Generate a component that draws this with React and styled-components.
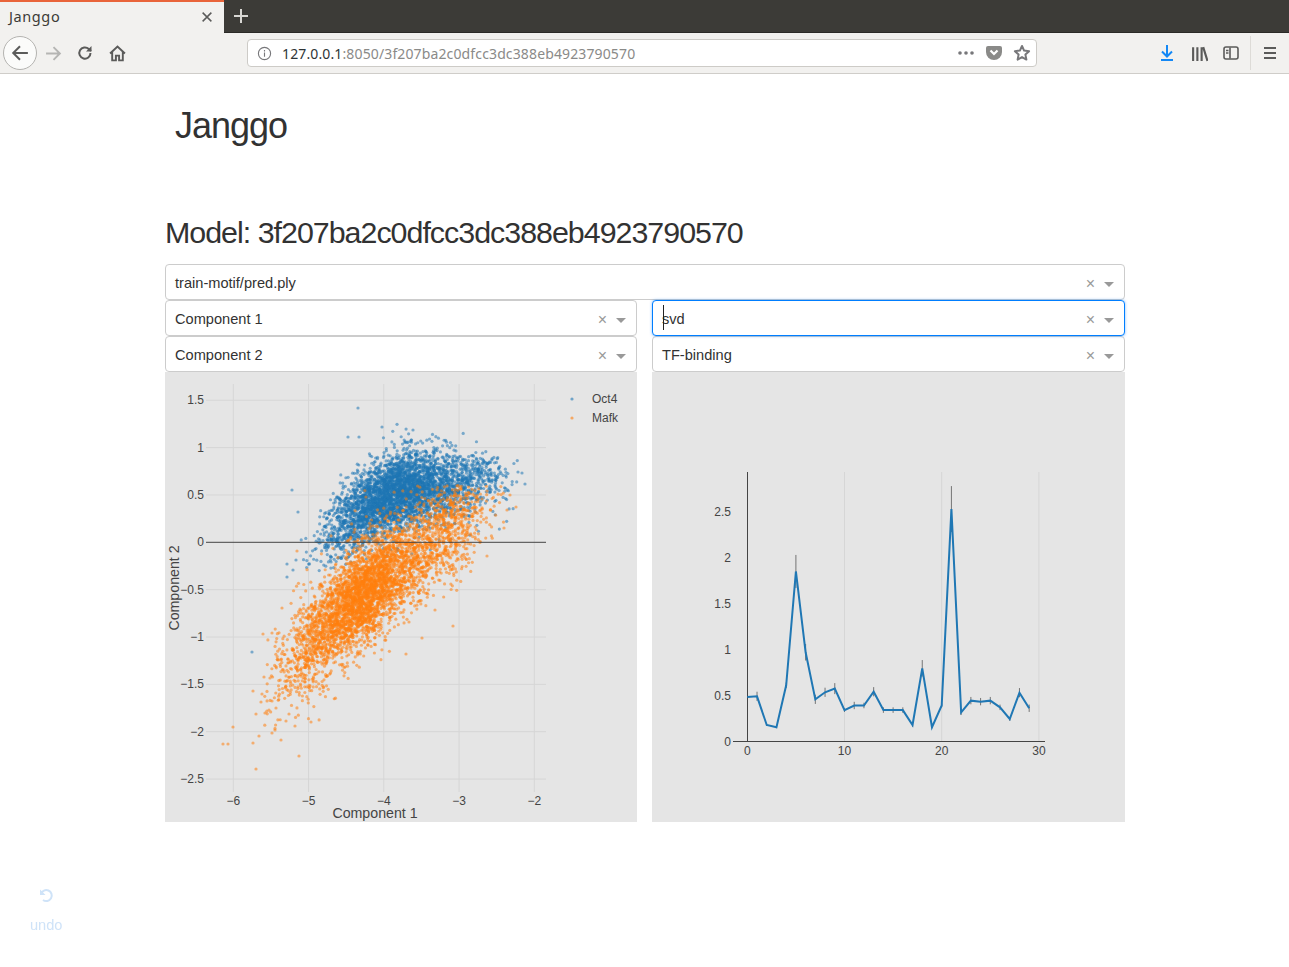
import { useMemo } from "react";
import styled, { createGlobalStyle } from "styled-components";

const GlobalStyle = createGlobalStyle`
  html, body {
    margin: 0;
    padding: 0;
    background: #fff;
    font-family: "Liberation Sans", Arial, sans-serif;
  }
`;

/* browser chrome */
const TabStrip = styled.div`
  display: flex;
  height: 33px;
  background: #3c3b37;
  box-shadow: inset 0 -1px 0 #2b2a27;
`;

const Tab = styled.div`
  display: flex;
  align-items: center;
  justify-content: space-between;
  width: 224px;
  box-sizing: border-box;
  padding: 0 10px 4px 9px;
  background: #f2f1ef;
  border-top: 2px solid #e9643a;
  color: #3c3b37;
  font: 14.5px "Noto Sans", sans-serif;
  letter-spacing: 0.6px;
  svg {
    margin-top: 2px;
  }
`;

const NewTab = styled.div`
  display: flex;
  align-items: center;
  justify-content: center;
  width: 34px;
  padding-bottom: 2px;
  color: #d8d7d3;
`;

const Toolbar = styled.div`
  display: flex;
  align-items: center;
  height: 40px;
  padding-left: 3px;
  background: #f2f1ef;
  border-bottom: 1px solid #cfcdc9;
`;

const BackButton = styled.div`
  display: flex;
  align-items: center;
  justify-content: center;
  width: 32px;
  height: 32px;
  border: 1px solid #b4b3b0;
  border-radius: 50%;
  background: #fbfbfa;
`;

const NavButton = styled.div`
  display: flex;
  align-items: center;
  justify-content: center;
  width: 32px;
  height: 32px;
`;

const AddressBar = styled.div`
  display: flex;
  align-items: center;
  width: 790px;
  height: 28px;
  margin: 0 114px;
  box-sizing: border-box;
  padding: 0 5px 0 9px;
  background: #fff;
  border: 1px solid #cdcbc7;
  border-radius: 4px;
  font: 14px "Noto Sans", sans-serif;
  letter-spacing: 0.13px;
  color: #8a8a88;
`;

const Url = styled.div`
  flex: 1;
  margin-left: 10px;
  white-space: nowrap;
  b {
    font-weight: 400;
    color: #2e3436;
  }
`;

const UrlActions = styled.div`
  display: flex;
  align-items: center;
  gap: 10px;
`;

const ToolbarDivider = styled.div`
  width: 1px;
  height: 34px;
  margin: 0 3px 0 3px;
  background: #dddbd7;
`;

/* page */
const Page = styled.div`
  width: 960px;
  margin-left: 165px;
  color: #323232;
`;

const Brand = styled.h1`
  margin: 0;
  padding: 30px 0 0 10px;
  height: 60px;
  font-size: 36px;
  line-height: 44px;
  font-weight: 300;
  letter-spacing: -1px;
`;

const ModelTitle = styled.h2`
  margin: 0;
  padding-top: 50px;
  height: 50px;
  font-size: 30.4px;
  line-height: 36px;
  font-weight: 300;
  letter-spacing: -1px;
`;

const Columns = styled.div`
  display: grid;
  grid-template-columns: 472px 473px;
  column-gap: 15px;
`;

const SelectBox = styled.div`
  position: relative;
  display: flex;
  align-items: center;
  height: 36px;
  box-sizing: border-box;
  padding: 0 10px 0 9px;
  background: #fff;
  border: 1px solid ${(p) => (p.$focused ? "#007eff" : "#ccc")};
  border-radius: 4px;
  box-shadow: ${(p) => (p.$focused ? "0 0 3px rgba(0, 126, 255, 0.5)" : "none")};
  z-index: ${(p) => (p.$focused ? 1 : 0)};
  font-size: 14.6px;
`;

const SelectValue = styled.div`
  flex: 1;
  position: relative;
  top: 1px;
`;

const TextCaret = styled.span`
  position: absolute;
  left: 1px;
  top: -6px;
  width: 1px;
  height: 25px;
  background: #222;
`;

const Clear = styled.span`
  width: 17px;
  margin-top: 4px;
  color: #999;
  font-size: 16px;
  line-height: 1;
  text-align: center;
`;

const Arrow = styled.span`
  width: 0;
  height: 0;
  margin: 4px 0 0 5px;
  border: 5px solid transparent;
  border-top-color: #999;
  border-bottom-width: 0;
`;

const PlotPanel = styled.div`
  height: 450px;
  background: #e5e5e5;
`;

const PlotSvg = styled.svg`
  display: block;
  width: 100%;
  height: 100%;
`;

const Tick = styled.text`
  font-family: "Liberation Sans", Arial, sans-serif;
  font-size: 12px;
  fill: #444;
`;

const AxisTitle = styled.text`
  font-family: "Liberation Sans", Arial, sans-serif;
  font-size: 14.2px;
  fill: #444;
`;

const UndoButton = styled.div`
  position: fixed;
  left: 30px;
  top: 887px;
  display: flex;
  flex-direction: column;
  align-items: center;
  gap: 14px;
  color: #cfe3f8;
  font-size: 14.6px;
`;

/* icons */
const Stroke = ({ size = 16, color = "#5b5b5a", width = 2, children }) => (
  <svg width={size} height={size} viewBox="0 0 16 16" fill="none" stroke={color} strokeWidth={width}>
    {children}
  </svg>
);

const PocketIcon = () => (
  <svg width="18" height="16" viewBox="0 0 18 16">
    <path d="M1 3a2 2 0 0 1 2-2h12a2 2 0 0 1 2 2v4a8 8 0 0 1-16 0z" fill="#8a8a88" />
    <path d="M5.500 5.500 9 9l3.500-3.500" fill="none" stroke="#fff" strokeWidth="2.200" />
  </svg>
);

const StarIcon = () => (
  <svg width="18" height="18" viewBox="0 0 18 18">
    <path d="M9 2l2.100 4.600 5 .6-3.700 3.400 1 5L9 13.100 4.600 15.600l1-5L1.900 7.200l5-.6z" fill="none" stroke="#77777a" strokeWidth="2" strokeLinejoin="round" />
  </svg>
);

const BrowserChrome = () => (
  <>
    <TabStrip>
      <Tab>
        Janggo
        <Stroke size={14} width={1.7}>
          <path d="M3 3l10 10M13 3L3 13" />
        </Stroke>
      </Tab>
      <NewTab>
        <Stroke size={16} color="#d8d7d3" width={2}>
          <path d="M8 1v14M1 8h14" />
        </Stroke>
      </NewTab>
    </TabStrip>
    <Toolbar>
      <BackButton>
        <Stroke size={18} width={1.8}>
          <path d="M15 8H2M8 2L2 8l6 6" />
        </Stroke>
      </BackButton>
      <NavButton>
        <Stroke size={17} color="#b5b5b3" width={1.8}>
          <path d="M1 8h13M8 2l6 6-6 6" />
        </Stroke>
      </NavButton>
      <NavButton>
        <Stroke size={16} width={2}>
          <path d="M13.500 8a5.600 5.600 0 1 1-1.700-4L14 6" />
          <path d="M14.500 1v5.500H9" fill="#5b5b5a" stroke="none" />
        </Stroke>
      </NavButton>
      <NavButton>
        <Stroke size={17} width={1.8}>
          <path d="M1 8l7-6.500L15 8M3 6.500V14.500h3.500V10h3v4.500H13V6.500" />
        </Stroke>
      </NavButton>
      <AddressBar>
        <Stroke size={15} color="#77777a" width={1.2}>
          <circle cx="8" cy="8" r="6.500" />
          <path d="M8 7v4.500M8 4.200v1.600" />
        </Stroke>
        <Url>
          <b>127.0.0.1</b>:8050/3f207ba2c0dfcc3dc388eb4923790570
        </Url>
        <UrlActions>
          <svg width="18" height="4" viewBox="0 0 18 4" fill="#77777a">
            <circle cx="3" cy="2" r="1.800" />
            <circle cx="9" cy="2" r="1.800" />
            <circle cx="15" cy="2" r="1.800" />
          </svg>
          <PocketIcon />
          <StarIcon />
        </UrlActions>
      </AddressBar>
      <NavButton>
        <Stroke size={16} color="#1488f5" width={2}>
          <path d="M8 0v11M3 6.500l5 5 5-5M2 15h12" />
        </Stroke>
      </NavButton>
      <NavButton>
        <Stroke size={17} width={2}>
          <path d="M2 2v13M6 2v13M10 2v13M11.500 2l4 13" />
        </Stroke>
      </NavButton>
      <NavButton>
        <Stroke size={16} width={1.6}>
          <rect x="1" y="2" width="14" height="12" rx="2" />
          <path d="M7 2.500v11M3 5.500h2.500M3 8h2.500" />
        </Stroke>
      </NavButton>
      <ToolbarDivider />
      <NavButton>
        <Stroke size={16} width={2}>
          <path d="M2 3h12M2 8h12M2 13h12" />
        </Stroke>
      </NavButton>
    </Toolbar>
  </>
);

const Select = ({ value, focused }) => (
  <SelectBox $focused={focused}>
    <SelectValue>
      {focused && <TextCaret />}
      {value}
    </SelectValue>
    <Clear>×</Clear>
    <Arrow />
  </SelectBox>
);

/* seeded random so that the picture is stable */
const makeRandom = (seed) => {
  let s = seed;
  const uniform = () => {
    s = (s + 0x6d2b79f5) | 0;
    let t = Math.imul(s ^ (s >>> 15), 1 | s);
    t = (t + Math.imul(t ^ (t >>> 7), 61 | t)) ^ t;
    return ((t ^ (t >>> 14)) >>> 0) / 4294967296;
  };
  const normal = () =>
    Math.sqrt(-2 * Math.log(uniform() + 1e-9)) * Math.cos(2 * Math.PI * uniform());
  return { uniform, normal };
};

const scatterX = (v) => 68.3 + (v + 6) * 75.25;
const scatterY = (v) => 170.3 - v * 94.7;

const makeBlue = () => {
  const { normal, uniform } = makeRandom(11);
  const pts = [];
  for (let i = 0; i < 4000; i++) {
    const tail = uniform() < 0.07;
    const x = tail ? -2.8 + normal() * 0.27 : -3.82 + normal() * 0.46;
    const base = x < -3.3 ? 0.72 - 0.26 * (x + 3.3) ** 2 : 0.72 - 0.04 * (x + 3.3);
    const y = base + normal() * (tail ? 0.12 : 0.2) - (tail ? 0 : 0.12);
    if (y > -0.3 && x < -2.2 && x > -5.1 && y < 1.25) pts.push([scatterX(x), scatterY(y)]);
  }
  return pts;
};

const makeOrange = () => {
  const { normal, uniform } = makeRandom(29);
  const pts = [];
  for (let i = 0; i < 4300; i++) {
    const r = uniform();
    let x = -4.25 + normal() * 0.42;
    if (r < 0.17) x = -3.15 + normal() * 0.32;
    else if (r < 0.27) x = -4.95 + normal() * 0.28;
    const base = x < -4.1 ? -0.42 + 0.72 * (x + 4.1) : -0.42 + 0.58 * (x + 4.1);
    const y = base + normal() * (x < -4.9 ? 0.26 : 0.27);
    if (x > -5.6 && x < -2.4 && y < 0.6) pts.push([scatterX(x), scatterY(y)]);
  }
  return pts;
};

// stray points read off the picture, in panel coordinates
const blueStrays = [
  [193, 36], [217, 55], [183, 65], [194, 65], [248, 58], [360, 112], [357, 101], [353, 100],
  [127, 118], [87, 280], [122, 192], [128, 198], [122, 205], [131, 188], [133, 140],
];
const orangeStrays = [
  [58, 372], [63, 372], [68, 355], [91, 397], [134, 384], [88, 371], [94, 364], [107, 361],
  [110, 358], [116, 368], [130, 354], [121, 349], [124, 342], [146, 350], [91, 342], [100, 341],
  [104, 338], [107, 329], [111, 336], [88, 319], [96, 330], [97, 322], [99, 305], [105, 306],
  [98, 262], [107, 261], [117, 236], [288, 254], [257, 266], [241, 282], [270, 238], [244, 250],
  [132, 179], [351, 135], [345, 123], [342, 138], [322, 184], [339, 156],
];

const scatterXTicks = [["−6", -6], ["−5", -5], ["−4", -4], ["−3", -3], ["−2", -2]];
const scatterYTicks = [
  ["1.5", 1.5], ["1", 1], ["0.5", 0.5], ["−0.5", -0.5], ["−1", -1],
  ["−1.5", -1.5], ["−2", -2], ["−2.5", -2.5],
];

const Dots = ({ points, color }) => (
  <g fill={color} fillOpacity="0.55">
    {points.map(([x, y], i) => (
      <circle key={i} cx={x} cy={y} r="1.600" />
    ))}
  </g>
);

const ScatterPlot = () => {
  const blue = useMemo(() => [...makeBlue(), ...blueStrays], []);
  const orange = useMemo(() => [...makeOrange(), ...orangeStrays], []);
  return (
    <PlotSvg viewBox="0 0 472 450">
      <g stroke="#d6d6d6" strokeWidth="1">
        {scatterXTicks.map(([label, v]) => (
          <line key={label} x1={scatterX(v)} x2={scatterX(v)} y1="12" y2="420" />
        ))}
        {scatterYTicks.map(([label, v]) => (
          <line key={label} x1="41" x2="381" y1={scatterY(v)} y2={scatterY(v)} />
        ))}
      </g>
      <Dots points={blue} color="#1f77b4" />
      <Dots points={orange} color="#ff7f0e" />
      <line x1="41" x2="381" y1={scatterY(0)} y2={scatterY(0)} stroke="#444" strokeWidth="1" />
      {scatterXTicks.map(([label, v]) => (
        <Tick key={label} x={scatterX(v)} y="433" textAnchor="middle">
          {label}
        </Tick>
      ))}
      {[...scatterYTicks, ["0", 0]].map(([label, v]) => (
        <Tick key={label} x="39" y={scatterY(v) + 4} textAnchor="end">
          {label}
        </Tick>
      ))}
      <AxisTitle x="210" y="446" textAnchor="middle">Component 1</AxisTitle>
      <AxisTitle x="14" y="216" textAnchor="middle" transform="rotate(-90 14 216)">Component 2</AxisTitle>
      <circle cx="407" cy="27" r="1.600" fill="#1f77b4" fillOpacity="0.6" />
      <circle cx="407" cy="46" r="1.600" fill="#ff7f0e" fillOpacity="0.6" />
      <Tick x="427" y="31">Oct4</Tick>
      <Tick x="427" y="50">Mafk</Tick>
    </PlotSvg>
  );
};

const lineValues = [
  0.483, 0.49, 0.178, 0.153, 0.61, 1.85, 0.97, 0.457, 0.534, 0.574, 0.34, 0.39, 0.39, 0.54, 0.34,
  0.34, 0.34, 0.178, 0.795, 0.153, 0.39, 2.53, 0.316, 0.443, 0.432, 0.443, 0.37, 0.243, 0.53, 0.36,
];
const lineErrors = [
  0, 0.05, 0.01, 0.01, 0.03, 0.18, 0.09, 0.05, 0.05, 0.06, 0.02, 0.04, 0.03, 0.05, 0.03, 0.03, 0.03,
  0.02, 0.09, 0.01, 0.02, 0.25, 0.03, 0.04, 0.04, 0.04, 0.03, 0.02, 0.05, 0.04,
];
const lineX = (i) => 95.3 + i * 9.72;
const lineY = (v) => 369.3 - v * 91.8;

const LinePlot = () => (
  <PlotSvg viewBox="0 0 473 450">
    <g stroke="#d6d6d6" strokeWidth="1">
      {[10, 20, 30].map((v) => (
        <line key={v} x1={lineX(v)} x2={lineX(v)} y1="100" y2="369" />
      ))}
    </g>
    <line x1="95.500" x2="95.500" y1="100" y2="369.500" stroke="#444" strokeWidth="1" />
    <line x1="81" x2="393" y1="369.500" y2="369.500" stroke="#444" strokeWidth="1" />
    <g stroke="#444" strokeWidth="1" strokeOpacity="0.7">
      {lineValues.map((v, i) => (
        <line key={i} x1={lineX(i)} x2={lineX(i)} y1={lineY(v + lineErrors[i])} y2={lineY(v - lineErrors[i])} />
      ))}
    </g>
    <polyline
      points={lineValues.map((v, i) => `${lineX(i)},${lineY(v)}`).join(" ")}
      fill="none"
      stroke="#1f77b4"
      strokeWidth="2"
    />
    {[0, 10, 20, 30].map((v) => (
      <Tick key={v} x={lineX(v)} y="383" textAnchor="middle">
        {v}
      </Tick>
    ))}
    {[["0", 0], ["0.5", 0.5], ["1", 1], ["1.5", 1.5], ["2", 2], ["2.5", 2.5]].map(([label, v]) => (
      <Tick key={label} x="79" y={lineY(v) + 4.5} textAnchor="end">
        {label}
      </Tick>
    ))}
  </PlotSvg>
);

const App = () => {
  return (
    <>
      <GlobalStyle />
      <BrowserChrome />
      <Page>
        <Brand>Janggo</Brand>
        <ModelTitle>Model: 3f207ba2c0dfcc3dc388eb4923790570</ModelTitle>
        <Select value="train-motif/pred.ply" />
        <Columns>
          <Select value="Component 1" />
          <Select value="svd" focused />
          <Select value="Component 2" />
          <Select value="TF-binding" />
          <PlotPanel>
            <ScatterPlot />
          </PlotPanel>
          <PlotPanel>
            <LinePlot />
          </PlotPanel>
        </Columns>
      </Page>
      <UndoButton>
        <Stroke size={16} color="#cfe3f8" width={2}>
          <path d="M3 7a5.500 5.500 0 1 1 2 6" />
          <path d="M2 2.500V8h5.500" fill="#cfe3f8" stroke="none" />
        </Stroke>
        undo
      </UndoButton>
    </>
  );
};

export default App;
